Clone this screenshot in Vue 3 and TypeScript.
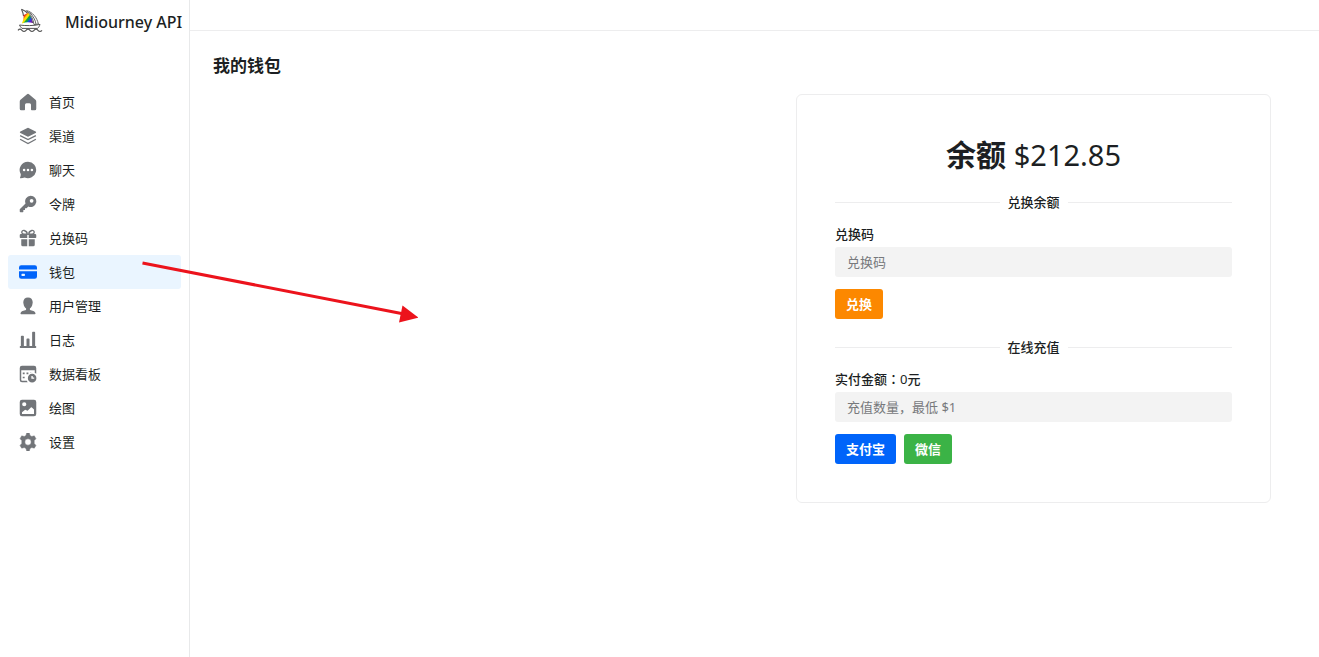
<script setup lang="ts">
import { ref } from 'vue'

interface NavItem {
  key: string
  label: string
}

const items: NavItem[] = [
  { key: 'home', label: '首页' },
  { key: 'channel', label: '渠道' },
  { key: 'chat', label: '聊天' },
  { key: 'token', label: '令牌' },
  { key: 'redeem', label: '兑换码' },
  { key: 'wallet', label: '钱包' },
  { key: 'users', label: '用户管理' },
  { key: 'logs', label: '日志' },
  { key: 'board', label: '数据看板' },
  { key: 'draw', label: '绘图' },
  { key: 'settings', label: '设置' },
]

const active = ref('wallet')
const balance = ref(212.85)
const code = ref('')
const amount = ref('')
const payable = ref(0)
</script>

<template>
  <div class="layout">
    <aside class="sidebar">
      <a class="brand" href="#">
        <svg class="logo" viewBox="0 0 26 24" aria-hidden="true">
          <defs>
            <linearGradient id="sail" gradientUnits="userSpaceOnUse" x1="5.500" y1="6.500" x2="15" y2="14">
              <stop offset="0.1" stop-color="#e3141c" />
              <stop offset="0.24" stop-color="#f5590f" />
              <stop offset="0.34" stop-color="#ffd800" />
              <stop offset="0.46" stop-color="#f2e600" />
              <stop offset="0.54" stop-color="#12a53a" />
              <stop offset="0.64" stop-color="#0f9c4e" />
              <stop offset="0.74" stop-color="#1250ee" />
              <stop offset="0.88" stop-color="#5a1fc8" />
              <stop offset="1" stop-color="#7a1fa8" />
            </linearGradient>
          </defs>
          <path d="M4.500 1.200C10 3 14.500 8.500 15.700 15" fill="none" stroke="#555" stroke-width="1.100" />
          <path d="M4.500 1.200C5.800 4 6.400 6 6.500 8" fill="none" stroke="#555" stroke-width="1.100" />
          <path d="M9.500 2.600C15.500 4 20 9.500 21.400 16L17 16.600C16.500 11 13.500 6 9.500 2.600ZM12.500 4.200C16 8 18.500 12 19 16.300" fill="none" stroke="#666" stroke-width="1" />
          <path d="M6.500 7.300L11 4.700C13.800 8 15 11.500 15.500 15C11.500 13.800 8.300 14.200 4.800 15.600C6.300 12.500 6.800 10 6.500 7.300Z" fill="url(#sail)" />
          <path d="M2.500 17C8 17.900 17 17.900 23 16.400C22.500 18.200 21.500 19.700 20.500 20.400H5C3.800 19.500 3 18.200 2.500 17Z" fill="#fff" stroke="#555" stroke-width="1" />
          <path d="M1 22.300Q3 20.100 5 22.300T9 22.300T13 22.300T17 22.300T21 22.300T25 22.300" fill="none" stroke="#555" stroke-width="1.200" />
        </svg>
        <span>Midiourney API</span>
      </a>
      <nav class="nav">
        <a
          v-for="item in items"
          :key="item.key"
          href="#"
          class="nav-item"
          :class="{ active: item.key === active }"
          @click.prevent="active = item.key"
        >
          <svg class="icon" viewBox="0 0 24 24" fill="currentColor" aria-hidden="true">
            <path v-if="item.key === 'home'" d="M10.700 1.500a2 2 0 0 1 2.600 0l8.700 7.600c.6.600 1 1.300 1 2.200V21a2 2 0 0 1-2 2h-4a1 1 0 0 1-1-1v-6.500a2 2 0 0 0-2-2h-4a2 2 0 0 0-2 2V22a1 1 0 0 1-1 1H3a2 2 0 0 1-2-2v-9.700c0-.9.400-1.600 1-2.200z" />
            <g v-else-if="item.key === 'channel'">
              <path d="M11.200 1.200a1.800 1.800 0 0 1 1.600 0l9.300 4.700c1 .5 1 1.700 0 2.200l-9.300 4.700a1.800 1.800 0 0 1-1.600 0L1.900 8.100c-1-.5-1-1.700 0-2.200z" />
              <path d="M1.500 11.500L12 16.800L22.500 11.500M1.500 16.300L12 22L22.500 16.300" fill="none" stroke="currentColor" stroke-width="1.800" />
            </g>
            <path v-else-if="item.key === 'chat'" fill-rule="evenodd" d="M12 1a11 11 0 1 1-4.500 21.100c-1.500.6-3.500.9-5.200.9-1 0-1.200-.9-.7-1.500.6-.9.900-2.300.7-4.100A11 11 0 0 1 12 1zM6.800 10.300a1.700 1.700 0 1 0 0 3.400a1.700 1.700 0 0 0 0-3.400zm5.200 0a1.700 1.700 0 1 0 0 3.400a1.700 1.700 0 0 0 0-3.400zm5.200 0a1.700 1.700 0 1 0 0 3.400a1.700 1.700 0 0 0 0-3.400z" />
            <path v-else-if="item.key === 'token'" fill-rule="evenodd" d="M15.500 1a7.500 7.500 0 1 1-3.100 14.300L10 17.700H8v2.200H5.800v2.500l-.6.600H2a1 1 0 0 1-1-1v-3l7.700-7.700A7.500 7.500 0 0 1 15.500 1zm1.300 4.200a2.500 2.500 0 1 0 0 5a2.500 2.500 0 0 0 0-5z" />
            <g v-else-if="item.key === 'redeem'">
              <path d="M11 7H8C1.500 7 3.500 1 7 2c2.500.7 4 2.500 4 5zM13 7h3c6.500 0 4.500-6 1-5c-2.500.7-4 2.500-4 5z" fill="none" stroke="currentColor" stroke-width="1.800" />
              <path d="M2.500 6.500H11V12H2a1 1 0 0 1-1-1V8a1.500 1.500 0 0 1 1.500-1.500zM13 6.500h8.500A1.500 1.500 0 0 1 23 8v3a1 1 0 0 1-1 1h-9zM3 13.800h8V23H5a2 2 0 0 1-2-2zM13 13.800h8V21a2 2 0 0 1-2 2h-6z" />
            </g>
            <path v-else-if="item.key === 'wallet'" fill-rule="evenodd" d="M3 3h18a3 3 0 0 1 3 3v2.500H0V6a3 3 0 0 1 3-3zM0 11h24v7a3 3 0 0 1-3 3H3a3 3 0 0 1-3-3zm4 3.200a.7.700 0 0 0-.7.700v1.800c0 .4.300.7.700.7h3.200c.4 0 .7-.3.700-.7v-1.800a.7.700 0 0 0-.7-.7z" />
            <path v-else-if="item.key === 'users'" d="M12 .5c4 0 6.300 2.700 6.300 6.500 0 1-.2 1.300-.3 2-.4 3.200-2 5.200-3.500 6.300v1.500c0 .6.500.8 1.200 1 3.500.7 6 2 6.300 3.700.1.900-.5 1.500-1.500 1.500h-17c-1 0-1.600-.6-1.500-1.500.3-1.700 2.800-3 6.300-3.700.7-.2 1.200-.4 1.200-1v-1.500C8 14.200 6.400 12.200 6 9c-.1-.7-.3-1-.3-2C5.700 3.200 8 .5 12 .5z" />
            <path v-else-if="item.key === 'logs'" d="M3.500 6.200h2a1 1 0 0 1 1 1V20H10v-9a1 1 0 0 1 1-1h2a1 1 0 0 1 1 1v9h3.500V2a1 1 0 0 1 1-1h2a1 1 0 0 1 1 1v18h.5a1 1 0 0 1 1 1v.8a1 1 0 0 1-1 1H2a1 1 0 0 1-1-1V21a1 1 0 0 1 1-1h.5V7.200a1 1 0 0 1 1-1z" />
            <g v-else-if="item.key === 'board'">
              <path fill-rule="evenodd" d="M4 1h16a3 3 0 0 1 3 3v7.500a7 7 0 0 0-2-1V7H3v12.500c0 .8.700 1.500 1.500 1.500h6a7 7 0 0 0 1.100 2H4a3 3 0 0 1-3-3V4a3 3 0 0 1 3-3zM5 10h2.500v2.300H5zm5 0h2.500v2.300H10zm5 0h2a8 8 0 0 0-2 .8zM5 15.500h2.500v2.300H5z" />
              <path fill-rule="evenodd" d="M17.500 11.800a5.700 5.700 0 1 1 0 11.400a5.700 5.700 0 0 1 0-11.400zm-1 2.700v3.800h3.800v-1.700h-2v-2.100z" />
            </g>
            <path v-else-if="item.key === 'draw'" fill-rule="evenodd" d="M4 1h16a3 3 0 0 1 3 3v16a3 3 0 0 1-3 3H4a3 3 0 0 1-3-3V4a3 3 0 0 1 3-3zM7 4.200a2.800 2.800 0 1 0 0 5.600a2.800 2.800 0 0 0 0-5.600zM4 20h16v-6l-2.800-2.600a1 1 0 0 0-1.400 0L11.500 15.700L9 14.500a1 1 0 0 0-1.200.1L4 17.700z" />
            <path v-else fill-rule="evenodd" d="M10.300 0h3.400l1 3.300 2.300 1.300 3.400-.8L22.600 7.500l-2.300 2.600v3.800l2.300 2.600-2.200 3.700-3.400-.8-2.300 1.300-1 3.300h-3.400l-1-3.300L7 19.400l-3.400.8-2.200-3.700 2.300-2.600v-3.800L1.400 7.500l2.200-3.700 3.400.8 2.300-1.300zM12 7.800a4.200 4.200 0 1 0 0 8.400a4.200 4.200 0 0 0 0-8.400z" stroke="currentColor" stroke-width=".6" stroke-linejoin="round" />
          </svg>
          <span>{{ item.label }}</span>
        </a>
      </nav>
    </aside>

    <div class="body">
      <header class="topbar"></header>
      <main class="content">
        <h1 class="title">我的钱包</h1>
        <section class="card">
          <h2 class="balance"><strong>余额</strong> <span class="sum">${{ balance.toFixed(2) }}</span></h2>

          <div class="divider"><span>兑换余额</span></div>
          <form class="form" @submit.prevent>
            <label for="code">兑换码</label>
            <input id="code" v-model="code" type="text" placeholder="兑换码" />
            <div class="actions">
              <button type="submit" class="orange">兑换</button>
            </div>
          </form>

          <div class="divider second"><span>在线充值</span></div>
          <form class="form" @submit.prevent>
            <label for="amount">实付金额<span class="mark">：</span><span class="num">{{ payable }}</span>元</label>
            <input id="amount" v-model="amount" type="text" placeholder="充值数量，最低 $1" />
            <div class="actions">
              <button type="button" class="blue">支付宝</button>
              <button type="button" class="green">微信</button>
            </div>
          </form>
        </section>
      </main>
    </div>

    <svg class="arrow" width="278" height="64" viewBox="0 0 278 64" aria-hidden="true">
      <path d="M2.500 3L264 54" stroke="#ec131c" stroke-width="3" />
      <path d="M262.500 45.500L278.500 57.500L259 62.500Z" fill="#ec131c" />
    </svg>
  </div>
</template>

<style>
body {
  margin: 0;
  background: #fff;
}
</style>

<style scoped>
.layout {
  position: relative;
  display: flex;
  min-height: 100vh;
  color: #1c1f23;
  font-family: "Noto Sans", "Noto Sans CJK SC", sans-serif;
  font-size: 13px;
  line-height: 20px;
}

.sidebar {
  flex: none;
  box-sizing: border-box;
  width: 190px;
  border-right: 1px solid #e8e9ea;
}

.brand {
  display: flex;
  align-items: center;
  gap: 22px;
  height: 44px;
  padding-left: 17px;
  color: inherit;
  font-size: 16px;
  font-weight: 500;
  text-decoration: none;
  white-space: nowrap;
}

.logo {
  flex: none;
  width: 26px;
  height: 24px;
  margin-bottom: 4px;
}

.nav {
  padding: 41px 8px 0;
}

.nav-item {
  display: flex;
  align-items: center;
  gap: 12px;
  height: 34px;
  padding: 0 11px;
  border-radius: 3px;
  color: inherit;
  text-decoration: none;
}

.nav-item.active {
  background: #eaf5ff;
}

.icon {
  flex: none;
  width: 18px;
  height: 18px;
  color: #727579;
}

.active .icon {
  color: #0064fa;
}

.body {
  flex: 1;
  min-width: 0;
}

.topbar {
  height: 30px;
  border-bottom: 1px solid #ededee;
}

.content {
  padding: 23px 48px 23px 23px;
}

.title {
  margin: 0 0 16px;
  font-size: 17px;
  font-weight: 700;
  line-height: 24px;
}

.card {
  box-sizing: border-box;
  max-width: 475px;
  margin-left: auto;
  padding: 38px;
  border: 1px solid #ededee;
  border-radius: 6px;
}

.balance {
  margin: 0 0 15px;
  font-size: 30px;
  font-weight: 400;
  line-height: 44px;
  text-align: center;
}

.sum {
  font-size: 29px;
}

.divider {
  display: flex;
  align-items: center;
  gap: 8px;
  font-weight: 500;
}

.divider::before,
.divider::after {
  content: "";
  flex: 1;
  height: 1px;
  background: #ededee;
}

.divider.second {
  margin-top: 18px;
}

.form {
  display: flex;
  flex-direction: column;
  padding-top: 12px;
}

.form label {
  margin-bottom: 3px;
  font-weight: 500;
}

.num {
  font-weight: 400;
}

.mark {
  font-family: "Noto Sans CJK TC", sans-serif;
  line-height: 1;
}

.form input {
  box-sizing: border-box;
  width: 100%;
  height: 30px;
  padding: 0 12px;
  border: 0;
  border-radius: 3px;
  background: #f3f3f3;
  color: inherit;
  font: inherit;
}

.form input::placeholder {
  color: #77797c;
  opacity: 1;
}

.actions {
  display: flex;
  gap: 8px;
  margin-top: 12px;
}

.actions button {
  height: 30px;
  padding: 0 11px;
  border: 0;
  border-radius: 3px;
  color: #fff;
  font: inherit;
  font-weight: 700;
  cursor: pointer;
}

.orange {
  background: #fc8800;
}

.blue {
  background: #0064fa;
}

.green {
  background: #3bb346;
}

.arrow {
  position: absolute;
  left: 140px;
  top: 260px;
  pointer-events: none;
}
</style>
